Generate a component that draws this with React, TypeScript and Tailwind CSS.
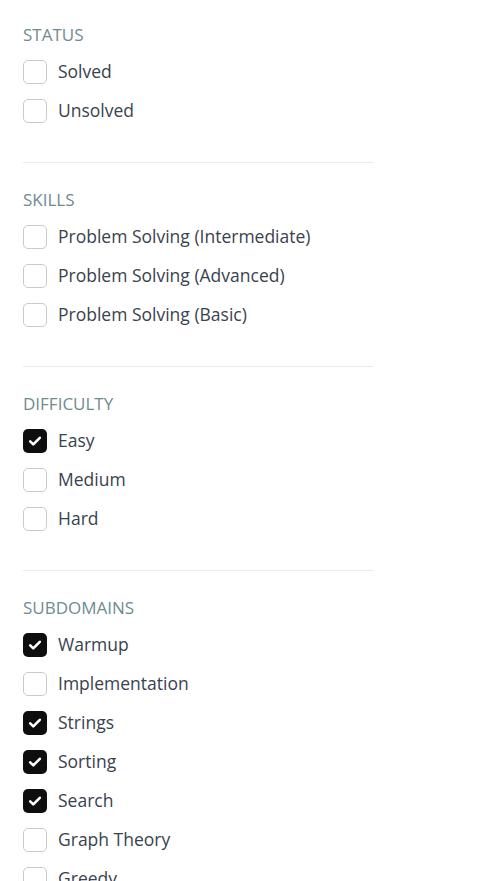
import React from "react";

type Option = { label: string; checked?: boolean };
type Section = { title: string; options: Option[] };

const sections: Section[] = [
  {
    title: "STATUS",
    options: [{ label: "Solved" }, { label: "Unsolved" }],
  },
  {
    title: "SKILLS",
    options: [
      { label: "Problem Solving (Intermediate)" },
      { label: "Problem Solving (Advanced)" },
      { label: "Problem Solving (Basic)" },
    ],
  },
  {
    title: "DIFFICULTY",
    options: [{ label: "Easy", checked: true }, { label: "Medium" }, { label: "Hard" }],
  },
  {
    title: "SUBDOMAINS",
    options: [
      { label: "Warmup", checked: true },
      { label: "Implementation" },
      { label: "Strings", checked: true },
      { label: "Sorting", checked: true },
      { label: "Search", checked: true },
      { label: "Graph Theory" },
      { label: "Greedy" },
    ],
  },
];

function Checkbox({ checked }: { checked?: boolean }) {
  if (checked) {
    return (
      <span className="flex h-6 w-6 shrink-0 items-center justify-center rounded-[5px] bg-[#0e0e0e]">
        <svg width="16" height="16" viewBox="0 0 16 16" fill="none">
          <path
            d="M3.2 8.4l3.1 3L12.8 4.8"
            stroke="white"
            strokeWidth="2.6"
            strokeLinecap="round"
            strokeLinejoin="round"
          />
        </svg>
      </span>
    );
  }
  return (
    <span className="h-6 w-6 shrink-0 rounded-[5px] border border-[#c6cbcf] bg-white" />
  );
}

export default function App() {
  return (
    <div
      className="h-[881px] overflow-hidden bg-white pl-[23px] pt-[25px]"
      style={{ fontFamily: '"Open Sans", sans-serif' }}
    >
      <div className="w-[350px]">
        {sections.map((section, i) => (
          <div key={section.title}>
            {i > 0 && <div className="mb-[27px] mt-[32px] h-px bg-[#e5eced]" />}
            <h3 className="text-[17px] leading-[20px] text-[#6f8b91]">{section.title}</h3>
            <ul className="mt-[7px]">
              {section.options.map((opt) => (
                <li key={opt.label} className="flex h-[39px] items-center gap-[11px]">
                  <Checkbox checked={opt.checked} />
                  <span className="text-[17.5px] text-[#39424e]">{opt.label}</span>
                </li>
              ))}
            </ul>
          </div>
        ))}
      </div>
    </div>
  );
}
